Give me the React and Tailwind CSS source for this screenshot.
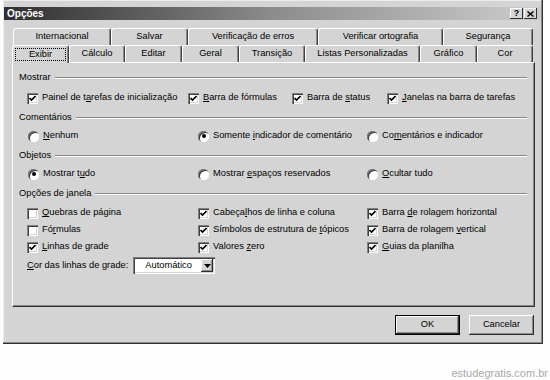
import React from "react";

const backTabs = [
  { label: "Internacional", w: "w-[98px]" },
  { label: "Salvar", w: "w-[77px]" },
  { label: "Verificação de erros", w: "w-[130px]" },
  { label: "Verificar ortografia", w: "w-[125px]" },
  { label: "Segurança", w: "w-[90px]" },
];

const frontTabs = [
  { label: "Cálculo", w: "w-[56px]" },
  { label: "Editar", w: "w-[57px]" },
  { label: "Geral", w: "w-[57px]" },
  { label: "Transição", w: "w-[66px]" },
  { label: "Listas Personalizadas", w: "w-[115px]" },
  { label: "Gráfico", w: "w-[57px]" },
  { label: "Cor", w: "w-[56px]" },
];

const Check = ({ checked }) => (
  <span className="w-[11px] h-[11px] shrink-0 bg-white flex items-center justify-center shadow-[inset_1px_1px_0_#808080,inset_2px_2px_0_#404040,inset_-1px_-1px_0_#ffffff,inset_-2px_-2px_0_#d4d4d4]">
    {checked && (
      <svg width="7" height="7" viewBox="0 0 7 7">
        <path d="M0.5 3 L2.5 5 L6.5 1" stroke="#000" strokeWidth="1.6" fill="none" />
      </svg>
    )}
  </span>
);

const Radio = ({ checked }) => (
  <span className="w-[11px] h-[11px] shrink-0 rounded-full bg-white flex items-center justify-center shadow-[inset_1px_1px_0_#808080,inset_2px_2px_0_#404040,inset_-1px_-1px_0_#ffffff]">
    {checked && <span className="w-[4px] h-[4px] rounded-full bg-black" />}
  </span>
);

const Item = ({ radio, checked, children, w }) => (
  <div className={`flex items-center gap-[4px] h-[16px] ${w || ""}`}>
    {radio ? <Radio checked={checked} /> : <Check checked={checked} />}
    <span className="whitespace-nowrap">{children}</span>
  </div>
);

const Group = ({ label, className }) => (
  <div className={`flex items-center h-[14px] ${className}`}>
    <span className="whitespace-nowrap">{label}</span>
    <div className="flex-1 ml-[4px] border-t border-t-[#8a8a8a] border-b border-b-white" />
  </div>
);

const U = ({ children }) => <span className="underline underline-offset-1">{children}</span>;

export default function App() {
  return (
    <div className="w-[550px] h-[380px] bg-[#fcfdfc] pl-[3px] text-[9.3px] text-black leading-none font-['Liberation_Sans',Arial,sans-serif]">
      <div className="w-[540px] h-[344px] bg-[#d4d4d4] pt-[7px] pl-[1px] flex flex-col shadow-[inset_-1px_-1px_0_#303030,inset_-2px_-2px_0_#8a8a8a,inset_1px_1px_0_#ececec]">
        {/* title bar */}
        <div className="w-[537px] h-[13px] bg-linear-to-r from-[#303030] via-[#8c8c8c] to-[#cdcdcd] flex items-center pl-[3px] pr-[4px]">
          <span className="text-white font-bold text-[10px]">Opções</span>
          <div className="ml-auto flex gap-[1px]">
            <span className="w-[13px] h-[11px] bg-[#d4d4d4] flex items-center justify-center font-bold text-[9px] shadow-[inset_-1px_-1px_0_#303030,inset_1px_1px_0_#ffffff]">?</span>
            <span className="w-[13px] h-[11px] bg-[#d4d4d4] flex items-center justify-center shadow-[inset_-1px_-1px_0_#303030,inset_1px_1px_0_#ffffff]">
              <svg width="7" height="6" viewBox="0 0 7 6">
                <path d="M0.5 0.5 L6.5 5.5 M6.5 0.5 L0.5 5.5" stroke="#000" strokeWidth="1.4" />
              </svg>
            </span>
          </div>
        </div>

        {/* tabs */}
        <div className="mt-[8px] ml-[8px] flex flex-col">
          <div className="flex ml-[1px] h-[17px]">
            {backTabs.map((t) => (
              <div
                key={t.label}
                className={`${t.w} h-[17px] flex items-center justify-center border-t border-l border-white border-r border-r-[#404040] rounded-t-[3px] shadow-[inset_-1px_0_0_#8a8a8a]`}
              >
                {t.label}
              </div>
            ))}
          </div>
          <div className="flex h-[17px]">
            <div className="w-[57px] h-[18px] relative z-10 bg-[#d4d4d4] flex items-center justify-center border-t border-l border-white border-r border-r-[#404040] rounded-t-[3px] shadow-[inset_-1px_0_0_#8a8a8a]">
              <span className="border border-dotted border-black w-[51px] h-[13px] flex items-center justify-center">Exibir</span>
            </div>
            {frontTabs.map((t) => (
              <div
                key={t.label}
                className={`${t.w} h-[17px] flex items-center justify-center border-t border-l border-white border-r border-r-[#404040] rounded-t-[3px] shadow-[inset_-1px_0_0_#8a8a8a]`}
              >
                {t.label}
              </div>
            ))}
          </div>

          {/* panel */}
          <div className="w-[523px] h-[245px] border-t border-l border-white border-r border-b border-r-[#303030] border-b-[#303030] shadow-[inset_-1px_-1px_0_#8a8a8a] pt-[8px] pl-[6px] pr-[7px] flex flex-col">
            <Group label="Mostrar" />
            <div className="flex ml-[8px] mt-[5px]">
              <Item checked w="w-[161px]">Painel de t<U>a</U>refas de inicialização</Item>
              <Item checked w="w-[104px]"><U>B</U>arra de fórmulas</Item>
              <Item checked w="w-[95px]">Barra de <U>s</U>tatus</Item>
              <Item checked><U>J</U>anelas na barra de tarefas</Item>
            </div>

            <Group label="Comentários" className="mt-[5px]" />
            <div className="grid grid-cols-[170px_169px_1fr] ml-[9px] mt-[3px]">
              <Item radio><U>N</U>enhum</Item>
              <Item radio checked>Somente <U>i</U>ndicador de comentário</Item>
              <Item radio>Co<U>m</U>entários e indicador</Item>
            </div>

            <Group label="Objetos" className="mt-[5px]" />
            <div className="grid grid-cols-[170px_169px_1fr] ml-[9px] mt-[3px]">
              <Item radio checked>Mostrar t<U>u</U>do</Item>
              <Item radio>Mostrar <U>e</U>spaços reservados</Item>
              <Item radio><U>O</U>cultar tudo</Item>
            </div>

            <Group label="Opções de janela" className="mt-[5px]" />
            <div className="grid grid-cols-[171px_169px_1fr] ml-[8px] mt-[4px] gap-y-[1px]">
              <Item><U>Q</U>uebras de página</Item>
              <Item checked>Cabeça<U>l</U>hos de linha e coluna</Item>
              <Item checked>Barra <U>d</U>e rolagem horizontal</Item>
              <Item>Fó<U>r</U>mulas</Item>
              <Item checked>Símbolos de estrutura de <U>t</U>ópicos</Item>
              <Item checked>Barra de rolagem <U>v</U>ertical</Item>
              <Item checked><U>L</U>inhas de grade</Item>
              <Item checked>Valores <U>z</U>ero</Item>
              <Item checked><U>G</U>uias da planilha</Item>
            </div>

            <div className="flex items-center ml-[8px] mt-[2px] h-[17px]">
              <span className="whitespace-nowrap"><U>C</U>or das linhas de grade:</span>
              <div className="ml-[5px] w-[82px] h-[17px] bg-white flex items-center shadow-[inset_1px_1px_0_#808080,inset_2px_2px_0_#404040,inset_-1px_-1px_0_#ffffff,inset_-2px_-2px_0_#d4d4d4] pl-[12px] pr-[2px]">
                <span>Automático</span>
                <span className="ml-auto w-[12px] h-[13px] bg-[#d4d4d4] flex items-center justify-center shadow-[inset_-1px_-1px_0_#303030,inset_1px_1px_0_#ffffff,inset_-2px_-2px_0_#8a8a8a]">
                  <svg width="7" height="4" viewBox="0 0 7 4">
                    <path d="M0 0 L7 0 L3.5 4 Z" fill="#000" />
                  </svg>
                </span>
              </div>
            </div>
          </div>

          {/* buttons */}
          <div className="w-[523px] flex justify-end gap-[9px] pr-[1px] mt-[8px]">
            <button className="w-[65px] h-[20px] bg-[#d4d4d4] border border-black flex items-center justify-center shadow-[inset_-1px_-1px_0_#303030,inset_1px_1px_0_#ffffff,inset_-2px_-2px_0_#8a8a8a]">
              OK
            </button>
            <button className="w-[65px] h-[20px] bg-[#d4d4d4] flex items-center justify-center shadow-[inset_-1px_-1px_0_#303030,inset_1px_1px_0_#ffffff,inset_-2px_-2px_0_#8a8a8a]">
              Cancelar
            </button>
          </div>
        </div>
      </div>
      <div className="mt-[22px] h-[14px] flex items-center justify-end pr-[2px] text-[11px] text-[#a8aaa8]">
        estudegratis.com.br
      </div>
    </div>
  );
}
